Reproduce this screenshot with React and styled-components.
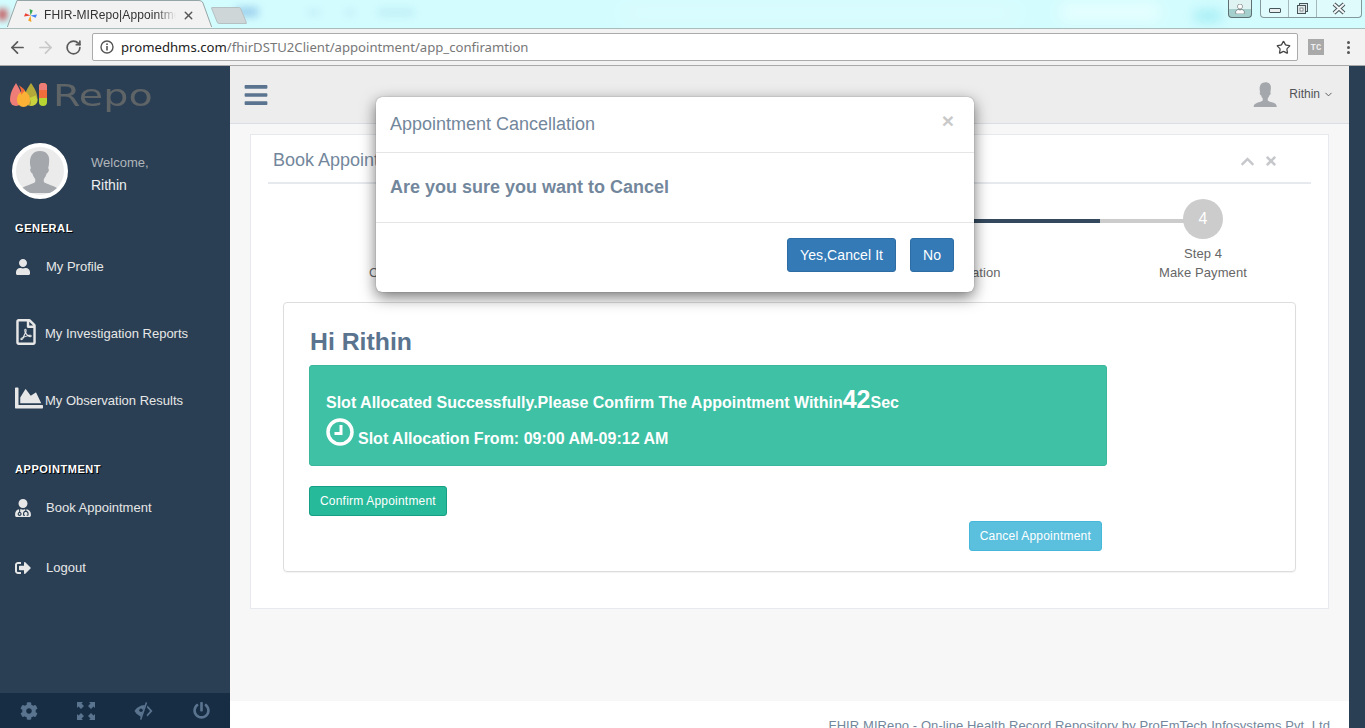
import React from 'react';
import styled, { createGlobalStyle } from 'styled-components';
import { ArrowLeft, ArrowRight, RotateCw, Star, X, ChevronDown } from 'lucide-react';
import { FaUser, FaRegFilePdf, FaChartArea, FaUserMd, FaSignOutAlt, FaCog, FaPowerOff, FaBars, FaChevronUp, FaTimes } from 'react-icons/fa';

const Global = createGlobalStyle`
  html, body { margin: 0; padding: 0; background: #2a3f54; }
  * { box-sizing: border-box; }
  body { font-family: "Liberation Sans", Arial, sans-serif; font-size: 13px; color: #73879c; }
`;

const Screen = styled.div`
  position: relative;
  width: 1365px;
  height: 728px;
  overflow: hidden;
  display: flex;
  flex-direction: column;
`;

/* ---------- browser chrome ---------- */
const TabStrip = styled.div`
  position: relative;
  height: 28px;
  flex: none;
  background: #d3fcfe;
  overflow: hidden;
  display: flex;
  padding-left: 7px;
`;
const Blur = styled.div`
  position: absolute;
  filter: blur(${p => p.$b || 6}px);
  background: ${p => p.$c};
`;
const TabShape = styled.svg`
  position: absolute;
  left: 0;
  top: 0;
`;
const Tab = styled.div`
  position: relative;
  width: 205px;
  height: 28px;
  display: flex;
  align-items: center;
  padding: 2px 0 0 17px;
  font-size: 12px;
  color: #333;
`;
const FaviconSlot = styled.span`
  position: relative;
  display: flex;
`;
const TabTitle = styled.span`
  margin-left: 7px;
  width: 132px;
  white-space: nowrap;
  overflow: hidden;
  position: relative;
  letter-spacing: 0.1px;
  -webkit-mask-image: linear-gradient(90deg, #000 85%, transparent);
  mask-image: linear-gradient(90deg, #000 85%, transparent);
`;
const TabClose = styled.span`
  position: relative;
  display: flex;
  margin-left: 6px;
  color: #555;
`;
const NewTab = styled.div`
  position: relative;
  width: 30px;
  height: 17px;
  margin: 7px 0 0 2px;
  background: #cfd6d8;
  border: 1px solid #b5c0c2;
  border-radius: 2px;
  transform: skewX(22deg);
`;
const WindowButtons = styled.div`
  position: absolute;
  right: 3px;
  top: 0;
  display: flex;
  gap: 8px;
`;
const UserButton = styled.div`
  width: 24px;
  height: 18px;
  border: 1px solid #5d6f70;
  border-top: none;
  border-radius: 0 0 4px 4px;
  background: linear-gradient(#dff3f3 55%, #a5cfcd 55%);
  display: flex;
  align-items: center;
  justify-content: center;
`;
const CaptionGroup = styled.div`
  width: 102px;
  height: 18px;
  display: flex;
  border: 1px solid #82999b;
  border-top: none;
  border-radius: 0 0 4px 4px;
  background: rgba(235, 250, 250, 0.55);
`;
const Caption = styled.div`
  flex: ${p => p.$wide ? 1.6 : 1};
  display: flex;
  align-items: center;
  justify-content: center;
  border-left: ${p => p.$first ? 'none' : '1px solid #a4b8ba'};
`;
const MinGlyph = styled.div`
  width: 12px;
  height: 5px;
  margin-top: 4px;
  background: #e9eeee;
  border: 1px solid #46555a;
  border-radius: 1px;
`;

const Toolbar = styled.div`
  height: 38px;
  flex: none;
  display: flex;
  align-items: center;
  background: #f2f2f2;
  border-top: 1px solid #a9bcbc;
  border-bottom: 1px solid #a8a8a8;
  padding: 0 0 0 3px;
`;
const NavButton = styled.span`
  width: 28px;
  display: flex;
  justify-content: center;
  color: ${p => p.$off ? '#c8c8c8' : '#5a5a5a'};
`;
const AddressBar = styled.div`
  margin-left: 5px;
  width: 1206px;
  height: 28px;
  display: flex;
  align-items: center;
  background: #fff;
  border: 1px solid #ababab;
  border-radius: 2px;
  padding: 0 6px 0 7px;
  font-family: "Noto Sans", sans-serif;
  font-size: 13.15px;
  color: #777;
`;
const Host = styled.span`
  color: #222;
`;
const UrlText = styled.div`
  flex: 1;
  margin-left: 7px;
  white-space: nowrap;
`;
const TcBadge = styled.div`
  width: 16px;
  height: 16px;
  margin-left: 10px;
  background: #a9a9a9;
  color: #eee;
  font: bold 9px/19px "Liberation Mono", monospace;
  text-align: center;
  position: relative;
`;
const Kebab = styled.div`
  margin-left: 23px;
  display: flex;
  flex-direction: column;
  gap: 2px;
`;
const Dot = styled.i`
  width: 3px;
  height: 3px;
  background: #555;
  border-radius: 50%;
`;

/* ---------- page ---------- */
const Page = styled.div`
  flex: 1;
  min-height: 0;
  display: flex;
  background: #2a3f54;
`;
const Sidebar = styled.aside`
  width: 230px;
  flex: none;
  display: flex;
  flex-direction: column;
  background: #2a3f54;
  position: relative;
`;
const LogoRow = styled.div`
  height: 66px;
  flex: none;
  display: flex;
  align-items: flex-start;
  padding: 16px 0 0 10px;
`;
const LogoWord = styled.span`
  font-family: "DejaVu Sans", sans-serif;
  font-size: 31px;
  line-height: 27px;
  color: #5f6467;
  margin-left: 5px;
  display: inline-block;
  transform: scaleX(1.28);
  transform-origin: 0 50%;
`;
const ProfileBlock = styled.div`
  height: 89px;
  flex: none;
  display: flex;
  padding: 11px 0 0 12px;
`;
const Avatar = styled.div`
  width: 56px;
  height: 56px;
  border-radius: 50%;
  background: #ebebeb;
  border: 4px solid #fff;
  overflow: hidden;
  display: flex;
  align-items: flex-end;
  justify-content: center;
  flex: none;
`;
const WelcomeBox = styled.div`
  margin-left: 23px;
  padding-top: 11px;
`;
const WelcomeLabel = styled.div`
  font-size: 13px;
  line-height: 18px;
  color: #b0b5ba;
`;
const WelcomeName = styled.div`
  font-size: 14px;
  line-height: 18px;
  margin-top: 4px;
  color: #ecf0f1;
`;
const SectionTitle = styled.h3`
  margin: ${p => p.$mt || 0}px 0 0;
  height: 14px;
  padding-left: 15px;
  font-size: 11px;
  line-height: 14px;
  font-weight: bold;
  letter-spacing: ${p => p.$ls}px;
  color: #fff;
  text-shadow: 1px 1px #000;
`;
const MenuItem = styled.div`
  height: ${p => p.$h}px;
  display: flex;
  align-items: flex-start;
  padding: 23px 0 0 15px;
  font-size: 13px;
  line-height: 18px;
  color: #e7e7e7;
`;
const MenuIcon = styled.span`
  position: relative;
  width: ${p => p.$w || 31}px;
  height: 18px;
  flex: none;
  display: block;
  font-size: ${p => p.$s || 16}px;
  line-height: 18px;
  color: #e7e7e7;
  & > svg {
    position: absolute;
    left: ${p => p.$x || 0}px;
    top: 50%;
    transform: translateY(calc(-50% + ${p => p.$y || 0}px));
  }
`;
const SidebarFooter = styled.div`
  margin-top: auto;
  height: 35px;
  flex: none;
  display: grid;
  grid-template-columns: repeat(4, 57.5px);
  background: #172d44;
  color: #5a738e;
`;
const FooterIcon = styled.span`
  display: flex;
  align-items: center;
  justify-content: center;
`;

const Main = styled.main`
  flex: none;
  width: 1119px;
  display: flex;
  flex-direction: column;
  background: #f7f7f7;
`;
const TopNav = styled.header`
  height: 58px;
  flex: none;
  display: flex;
  align-items: center;
  padding: 0 15px 0 13px;
  background: #ededed;
  border-bottom: 1px solid #d9dee4;
  color: #5a738e;
`;
const UserBlock = styled.div`
  margin-left: auto;
  display: flex;
  align-items: center;
  font-size: 12px;
  color: #515356;
`;
const UserName = styled.span`
  margin: -1px 0 0 10px;
  display: flex;
  align-items: center;
  gap: 3px;
`;
const Content = styled.div`
  flex: 1;
  padding: 10px 20px 0;
`;
const Panel = styled.section`
  height: 475px;
  background: #fff;
  border: 1px solid #e6e9ed;
  padding: 0 17px;
`;
const PanelHeader = styled.div`
  height: 49px;
  border-bottom: 2px solid #e6e9ed;
  display: flex;
  align-items: center;
  padding: 0 5px;
`;
const PanelTitle = styled.h2`
  margin: 3px 0 0;
  font-size: 18px;
  font-weight: normal;
  color: #73879c;
`;
const PanelTools = styled.div`
  margin-left: auto;
  display: flex;
  gap: 9px;
  color: #c5c7cb;
  padding: 6px 28px 0 0;
`;
const Stepper = styled.div`
  display: grid;
  grid-template-columns: 274px 258px 300px 206px;
  margin-top: 15px;
  height: 103px;
`;
const Step = styled.div`
  position: relative;
  display: flex;
  flex-direction: column;
  align-items: center;
  font-size: 13px;
  letter-spacing: 0.1px;
  line-height: 19px;
  color: #666;
`;
const Connector = styled.i`
  position: absolute;
  top: 20px;
  height: 4px;
  width: 50%;
  left: ${p => p.$side === 'left' ? 0 : '50%'};
  background: ${p => p.$done ? '#34495e' : '#ccc'};
`;
const StepCircle = styled.div`
  position: relative;
  width: 40px;
  height: 40px;
  border-radius: 50%;
  background: ${p => p.$done ? '#34495e' : '#ccc'};
  color: #fff;
  font-size: 16px;
  line-height: 40px;
  text-align: center;
  margin-bottom: 5px;
`;
const StepLine = styled.div`
  position: relative;
  white-space: nowrap;
`;
const Card = styled.div`
  height: 270px;
  margin: 0 15px;
  border: 1px solid #ddd;
  border-radius: 4px;
  padding: 21px 25px 0;
  box-shadow: 0 1px 1px rgba(0,0,0,.05);
  display: flex;
  flex-direction: column;
  align-items: flex-start;
`;
const Greeting = styled.h2`
  margin: 0 0 0 1px;
  font-size: 24.8px;
  line-height: 36px;
  font-weight: bold;
  color: #5a738e;
`;
const Alert = styled.div`
  margin-top: 5px;
  width: 798px;
  height: 101px;
  padding: 17px 16px 0;
  border: 1px solid #3ab79c;
  border-radius: 3px;
  background: #3fc1a5;
  color: #fff;
  font-size: 16px;
  font-weight: bold;
`;
const AlertLine = styled.div`
  display: flex;
  align-items: baseline;
  height: 32px;
  white-space: nowrap;
`;
const SlotLine = styled.div`
  display: flex;
  align-items: flex-end;
  height: 30px;
  margin-top: 4px;
  white-space: nowrap;
`;
const ClockSlot = styled.span`
  display: flex;
  margin-bottom: 3px;
`;
const SlotText = styled.span`
  margin-left: 4px;
  line-height: 20px;
`;
const Count = styled.span`
  font-size: 25px;
  line-height: 32px;
`;
const Btn = styled.button`
  font-family: inherit;
  font-size: ${p => p.$size || 12}px;
  letter-spacing: ${p => p.$ls || 0}px;
  height: ${p => p.$height || 30}px;
  padding: 0 ${p => p.$pad || 10}px;
  color: #fff;
  background: ${p => p.$bg};
  border: 1px solid ${p => p.$bd};
  border-radius: 3px;
  white-space: nowrap;
`;
const ConfirmRow = styled.div`
  margin-top: 20px;
`;
const CancelRow = styled.div`
  margin-top: 5px;
  width: 793px;
  display: flex;
  justify-content: flex-end;
`;
const PageFooter = styled.footer`
  height: 27px;
  flex: none;
  background: #fff;
  padding: 16px 19px 0 0;
  text-align: right;
  font-size: 13px;
  letter-spacing: 0.09px;
  line-height: 18px;
  color: #73879c;
  white-space: nowrap;
  overflow: hidden;
`;
const RightGap = styled.div`
  flex: 1;
  background: #2a3f54;
`;

/* ---------- modal ---------- */
const Modal = styled.div`
  position: absolute;
  left: 376px;
  top: 97px;
  width: 598px;
  height: 195px;
  background: #fff;
  border-radius: 6px;
  box-shadow: 0 5px 15px rgba(0,0,0,.55), 0 0 1px rgba(0,0,0,.5);
  display: flex;
  flex-direction: column;
`;
const ModalHeader = styled.div`
  height: 56px;
  flex: none;
  display: flex;
  align-items: center;
  padding: 0 15px 0 14px;
  border-bottom: 1px solid #e5e5e5;
`;
const ModalTitle = styled.h4`
  margin: 0;
  font-size: 18px;
  font-weight: normal;
  color: #73879c;
`;
const ModalClose = styled.span`
  margin: -9px 5px 0 auto;
  font-size: 21px;
  line-height: 1;
  font-weight: bold;
  color: #c9c9c9;
`;
const ModalBody = styled.div`
  height: 70px;
  flex: none;
  padding: 0 14px;
  display: flex;
  align-items: center;
  border-bottom: 1px solid #e5e5e5;
  font-size: 18px;
  font-weight: bold;
  color: #73879c;
`;
const ModalFooter = styled.div`
  padding: 15px 20px;
  display: flex;
  justify-content: flex-end;
  gap: 14px;
`;

/* ---------- drawings ---------- */
const Pinwheel = () => (
  <svg width="13" height="13" viewBox="0 0 14 14" style={{ flex: 'none' }}>
    <path d="M7 7 L6 0 L9.5 1.5 Z" fill="#34a853" />
    <path d="M7 7 L14 6 L12.5 9.5 Z" fill="#4285f4" />
    <path d="M7 7 L8 14 L4.5 12.5 Z" fill="#f4a125" />
    <path d="M7 7 L0 8 L1.5 4.5 Z" fill="#ea4335" />
  </svg>
);

const drop = (cx, top, bottom, w) => {
  const cy = bottom - w;
  return `M${cx} ${top} C${cx + w * 0.5} ${top + 5} ${cx + w} ${cy - 7} ${cx + w} ${cy} A${w} ${w} 0 0 1 ${cx - w} ${cy} C${cx - w} ${cy - 7} ${cx - w * 0.5} ${top + 5} ${cx} ${top} Z`;
};
const Logo = () => (
  <svg width="38" height="28" viewBox="0 0 38 28" style={{ flex: 'none' }}>
    <path d={drop(6, 1, 24, 6)} fill="#ee7d78" />
    <path d={drop(21, 1, 24, 6.5)} fill="#b5a83a" />
    <path d={drop(13.5, 7, 25, 6.5)} fill="#fbb136" />
    <path d="M15 8.5 C13.5 6 10 4 8.5 3 C10 5 12 9 11 13 C12.5 11 14 10 15 8.5 Z" fill="#ef6a3a" />
    <path d="M19.5 16 C21 19 22 21.5 20 23.5 C24 24.5 27.500 22 27.500 18 C27.500 17 26 14.5 25.5 13.5 Z" fill="#c9d23d" />
    <rect x="29" y="1" width="8" height="23" rx="4" fill="#b8d433" />
    <path d="M29 16 V5 a4 4 0 0 1 8 0 V16 Z" fill="#f26d3c" />
    <path d="M29 8 V5 a4 4 0 0 1 8 0 V8 Z" fill="#ee7d78" />
  </svg>
);

const Silhouette = ({ size, color }) => (
  <svg width={size} height={size} viewBox="0 0 48 48" style={{ display: 'block', flex: 'none' }}>
    <path fill={color} d="M24 2c-7 0-10.500 5-10.500 11.500 0 2.500.4 4.500 1 6.500-1 .5-1 2.500 0 4 .5 1 1 1.500 1.600 1.500.6 2.500 1.900 4.500 2.900 5.700v3.300c-2 2.300-12.500 4-15 7.500-.8 1-1 3-1 4h41c0-1-.2-3-1-4-2.500-3.500-13-5.200-15-7.500v-3.300c1-1.200 2.300-3.200 2.900-5.700.6 0 1.100-.5 1.600-1.500 1-1.500 1-3.500 0-4 .6-2 1-4 1-6.500C34.500 7 31 2 24 2z" />
  </svg>
);

const ClockIcon = () => (
  <svg width="28" height="28" viewBox="0 0 28 28" style={{ flex: 'none' }}>
    <circle cx="14" cy="14" r="12" fill="none" stroke="#fff" strokeWidth="3.500" />
    <path d="M15 7 V15.500 H8.500" fill="none" stroke="#fff" strokeWidth="3" />
  </svg>
);

const FullscreenIcon = () => (
  <svg width="18" height="18" viewBox="0 0 18 18" fill="currentColor">
    <path d="M0 0h6L4.500 1.500 7 4 4 7 1.500 4.500 0 6z" />
    <path d="M18 0v6l-1.500-1.500L14 7l-3-3 2.500-2.500L12 0z" />
    <path d="M0 18v-6l1.500 1.500L4 11l3 3-2.500 2.500L6 18z" />
    <path d="M18 18h-6l1.500-1.500L11 14l3-3 2.500 2.500L18 12z" />
  </svg>
);

const EyeCloseIcon = () => (
  <svg width="19" height="18" viewBox="0 0 19 18" fill="currentColor">
    <path d="M11 3 C6 3.200 2.300 6 .5 9 C1.500 10.800 3.200 12.700 5.400 13.800 L7 15 Z" />
    <path d="M11.800 0 L13.200 .8 L7.300 18 L5.900 17.200 Z" />
    <path d="M13.500 3.500 L18.500 9 L13.500 14.500 L12.500 13 L16 9 L13 5.500 Z" />
    <circle cx="7" cy="8.300" r="1.700" fill="#172d44" />
  </svg>
);

const InfoGlyph = () => (
  <svg width="14" height="14" viewBox="0 0 14 14" style={{ flex: 'none' }}>
    <circle cx="7" cy="7" r="6" fill="none" stroke="#555" strokeWidth="1.400" />
    <rect x="6.200" y="6" width="1.600" height="4.500" fill="#555" />
    <rect x="6.200" y="3.400" width="1.600" height="1.600" fill="#555" />
  </svg>
);

const CloseGlyph = () => (
  <svg width="16" height="13" viewBox="0 0 16 13">
    <path d="M3 2 L13 11 M13 2 L3 11" stroke="#46555a" strokeWidth="4" />
    <path d="M3 2 L13 11 M13 2 L3 11" stroke="#f2f6f6" strokeWidth="2" />
  </svg>
);

const steps = [
  { title: 'Step 1', sub: 'Choose Slot' },
  { title: 'Step 2', sub: 'Select Time' },
  { title: 'Step 3', sub: 'Slot Confirmation' },
  { title: 'Step 4', sub: 'Make Payment' },
];

export default function App() {
  return (
    <Screen>
      <Global />
      <TabStrip>
        <Blur $c="#c45a5e" $b={3} style={{ left: -2, top: 9, width: 9, height: 11 }} />
        <Blur $c="rgba(233,255,255,.5)" $b={12} style={{ left: 620, top: 4, width: 400, height: 18 }} />
        <Blur $c="#eafffe" $b={8} style={{ left: 1060, top: 4, width: 100, height: 16 }} />
        <Blur $c="#a5eef5" $b={6} style={{ left: 1195, top: 10, width: 26, height: 12 }} />
        <Blur $c="#8fc6ea" $b={4} style={{ left: 236, top: 8, width: 22, height: 8 }} />
        <Blur $c="rgba(179,228,242,.7)" $b={4} style={{ left: 308, top: 10, width: 12, height: 5 }} />
        <Blur $c="rgba(179,228,242,.7)" $b={4} style={{ left: 345, top: 10, width: 10, height: 5 }} />
        <Blur $c="rgba(169,224,238,.7)" $b={4} style={{ left: 378, top: 10, width: 36, height: 5 }} />
        <Tab>
          <TabShape width="205" height="28" viewBox="0 0 205 28">
            <path d="M0 28 L10 0.500 H192 Q195 0.500 196 3 L205 28 Z" fill="#f2f2f2" stroke="#96a5a5" />
            <rect x="0" y="27" width="205" height="1" fill="#f2f2f2" />
          </TabShape>
          <FaviconSlot><Pinwheel /></FaviconSlot>
          <TabTitle>FHIR-MIRepo|Appointment</TabTitle>
          <TabClose><X size={13} strokeWidth={2.500} /></TabClose>
        </Tab>
        <NewTab />
        <WindowButtons>
          <UserButton><FaUser size={10} color="#fff" stroke="#555" strokeWidth={30} /></UserButton>
          <CaptionGroup>
            <Caption $first><MinGlyph /></Caption>
            <Caption>
              <svg width="13" height="13" viewBox="0 0 13 13"><rect x="3.500" y="1.500" width="8" height="8" fill="#dfe9ea" stroke="#46555a" /><rect x="1.500" y="3.500" width="8" height="8" fill="#dfe9ea" stroke="#46555a" /><rect x="4" y="6" width="3" height="3" fill="#fff" stroke="#46555a" strokeWidth=".6" /></svg>
            </Caption>
            <Caption $wide><CloseGlyph /></Caption>
          </CaptionGroup>
        </WindowButtons>
      </TabStrip>
      <Toolbar>
        <NavButton><ArrowLeft size={19} strokeWidth={2.200} /></NavButton>
        <NavButton $off><ArrowRight size={19} strokeWidth={2.200} /></NavButton>
        <NavButton><RotateCw size={17} strokeWidth={2.400} /></NavButton>
        <AddressBar>
          <InfoGlyph />
          <UrlText><Host>promedhms.com</Host>/fhirDSTU2Client/appointment/app_confiramtion</UrlText>
          <Star size={15} strokeWidth={2} color="#444" />
        </AddressBar>
        <TcBadge>TC</TcBadge>
        <Kebab><Dot /><Dot /><Dot /></Kebab>
      </Toolbar>
      <Page>
        <Sidebar>
          <LogoRow>
            <Logo />
            <LogoWord>Repo</LogoWord>
          </LogoRow>
          <ProfileBlock>
            <Avatar><Silhouette size={46} color="#a4a8ac" /></Avatar>
            <WelcomeBox>
              <WelcomeLabel>Welcome,</WelcomeLabel>
              <WelcomeName>Rithin</WelcomeName>
            </WelcomeBox>
          </ProfileBlock>
          <SectionTitle $ls={0.6}>GENERAL</SectionTitle>
          <MenuItem $h={67}><MenuIcon><FaUser /></MenuIcon>My Profile</MenuItem>
          <MenuItem $h={67}><MenuIcon $w={30} $s={26} $x={-2} $y={-2}><FaRegFilePdf /></MenuIcon>My Investigation Reports</MenuItem>
          <MenuItem $h={67}><MenuIcon $w={30} $s={28} $y={-3}><FaChartArea /></MenuIcon>My Observation Results</MenuItem>
          <SectionTitle $mt={26} $ls={0.55}>APPOINTMENT</SectionTitle>
          <MenuItem $h={60}><MenuIcon $s={18} $x={-1}><FaUserMd /></MenuIcon>Book Appointment</MenuItem>
          <MenuItem $h={60}><MenuIcon><FaSignOutAlt /></MenuIcon>Logout</MenuItem>
          <SidebarFooter>
            <FooterIcon><FaCog size={18} /></FooterIcon>
            <FooterIcon><FullscreenIcon /></FooterIcon>
            <FooterIcon><EyeCloseIcon /></FooterIcon>
            <FooterIcon><FaPowerOff size={17} /></FooterIcon>
          </SidebarFooter>
        </Sidebar>
        <Main>
          <TopNav>
            <FaBars size={26} />
            <UserBlock>
              <Silhouette size={27} color="#a4a8ac" />
              <UserName>Rithin <ChevronDown size={11} /></UserName>
            </UserBlock>
          </TopNav>
          <Content>
            <Panel>
              <PanelHeader>
                <PanelTitle>Book Appointment</PanelTitle>
                <PanelTools><FaChevronUp size={15} /><FaTimes size={14} /></PanelTools>
              </PanelHeader>
              <Stepper>
                {steps.map((s, i) => (
                  <Step key={s.title}>
                    {i > 0 && <Connector $side="left" $done={i < 3} />}
                    {i < 3 && <Connector $side="right" $done />}
                    <StepCircle $done={i < 3}>{i + 1}</StepCircle>
                    <StepLine>{s.title}</StepLine>
                    <StepLine>{s.sub}</StepLine>
                  </Step>
                ))}
              </Stepper>
              <Card>
                <Greeting>Hi Rithin</Greeting>
                <Alert>
                  <AlertLine>Slot Allocated Successfully.Please Confirm The Appointment Within<Count>42</Count>Sec</AlertLine>
                  <SlotLine><ClockSlot><ClockIcon /></ClockSlot><SlotText>Slot Allocation From: 09:00 AM-09:12 AM</SlotText></SlotLine>
                </Alert>
                <ConfirmRow><Btn $ls={0.2} $bg="#26b99a" $bd="#169f85">Confirm Appointment</Btn></ConfirmRow>
                <CancelRow><Btn $ls={0.22} $bg="#5bc0de" $bd="#46b8da">Cancel Appointment</Btn></CancelRow>
              </Card>
            </Panel>
          </Content>
          <PageFooter>FHIR MIRepo - On-line Health Record Repository by ProEmTech Infosystems Pvt. Ltd</PageFooter>
        </Main>
        <RightGap />
      </Page>
      <Modal>
        <ModalHeader>
          <ModalTitle>Appointment Cancellation</ModalTitle>
          <ModalClose>×</ModalClose>
        </ModalHeader>
        <ModalBody>Are you sure you want to Cancel</ModalBody>
        <ModalFooter>
          <Btn $size={14} $ls={0.08} $height={34} $pad={12} $bg="#337ab7" $bd="#2e6da4">Yes,Cancel It</Btn>
          <Btn $size={14} $height={34} $pad={12} $bg="#337ab7" $bd="#2e6da4">No</Btn>
        </ModalFooter>
      </Modal>
    </Screen>
  );
}
